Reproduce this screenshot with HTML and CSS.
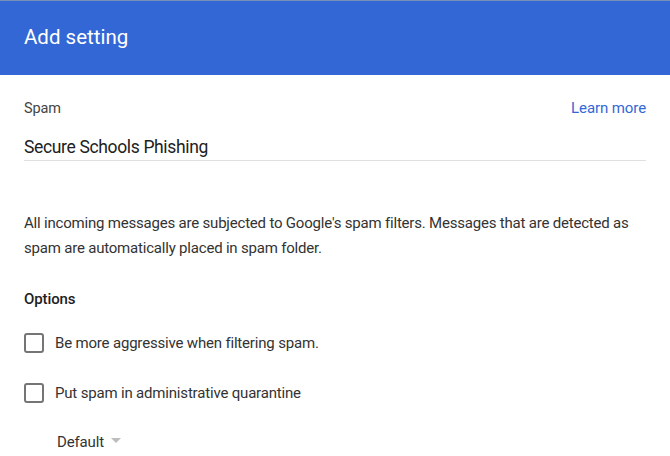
FILE: index.html
```html
<!DOCTYPE html>
<html>
<head>
<meta charset="utf-8">
<link rel="stylesheet" href="styles.css">
</head>
<body>
<div class="header"><h1 class="title">Add setting</h1></div>
<div class="content">
  <div class="label-row">
    <span class="label">Spam</span>
    <a class="link" href="#">Learn more</a>
  </div>
  <div class="field">Secure Schools Phishing</div>
  <p class="desc">All incoming messages are subjected to Google's spam filters. Messages that are detected as spam are automatically placed in spam folder.</p>
  <div class="options-title">Options</div>
  <label class="check-row"><span class="box"></span><span>Be more aggressive when filtering spam.</span></label>
  <label class="check-row"><span class="box"></span><span>Put spam in administrative quarantine</span></label>
  <div class="select"><span>Default</span><span class="arrow"></span></div>
</div>
</body>
</html>
```
FILE: styles.css
```css
* { box-sizing: border-box; }
html, body { margin: 0; padding: 0; background: #fff; }
body { font-family: Roboto, "Noto Sans", sans-serif; color: #212121; width: 670px; height: 456px; overflow: hidden; }
.header { background: #3367d6; height: 75px; border-top: 1px solid #7a8fb8; display: flex; align-items: center; padding: 0 24px 3px; }
.title { margin: 0; font-size: 20.5px; font-weight: 400; color: #fff; }
.content { padding: 0 24px; }
.label-row { display: flex; justify-content: space-between; align-items: center; margin-top: 23px; height: 20px; }
.label { font-size: 14.5px; color: #444; letter-spacing: -0.15px; }
.link { font-size: 15px; color: #3367d6; text-decoration: none; letter-spacing: -0.1px; }
.field { font-size: 17.5px; color: #212121; margin-top: 19px; padding-bottom: 3px; border-bottom: 1px solid #e0e0e0; letter-spacing: -0.35px; }
.desc { font-size: 15px; line-height: 25px; color: #333; margin: 50px 0 0 0; letter-spacing: -0.2px; }
.options-title { font-size: 15px; font-weight: 500; margin-top: 29px; color: #212121; letter-spacing: -0.1px; }
.check-row { display: flex; align-items: center; gap: 11px; font-size: 15px; color: #333; margin-top: 25px; height: 20px; letter-spacing: -0.18px; }
.check-row + .check-row { margin-top: 30px; }
.box { width: 20px; height: 20px; border: 2px solid #757575; border-radius: 3px; flex: none; }
.select { display: flex; align-items: center; gap: 7px; font-size: 15px; color: #333; margin: 30px 0 0 33px; letter-spacing: -0.15px; }
.arrow { width: 0; height: 0; border-left: 5px solid transparent; border-right: 5px solid transparent; border-top: 5px solid #bdbdbd; margin-top: -4px; }
```
